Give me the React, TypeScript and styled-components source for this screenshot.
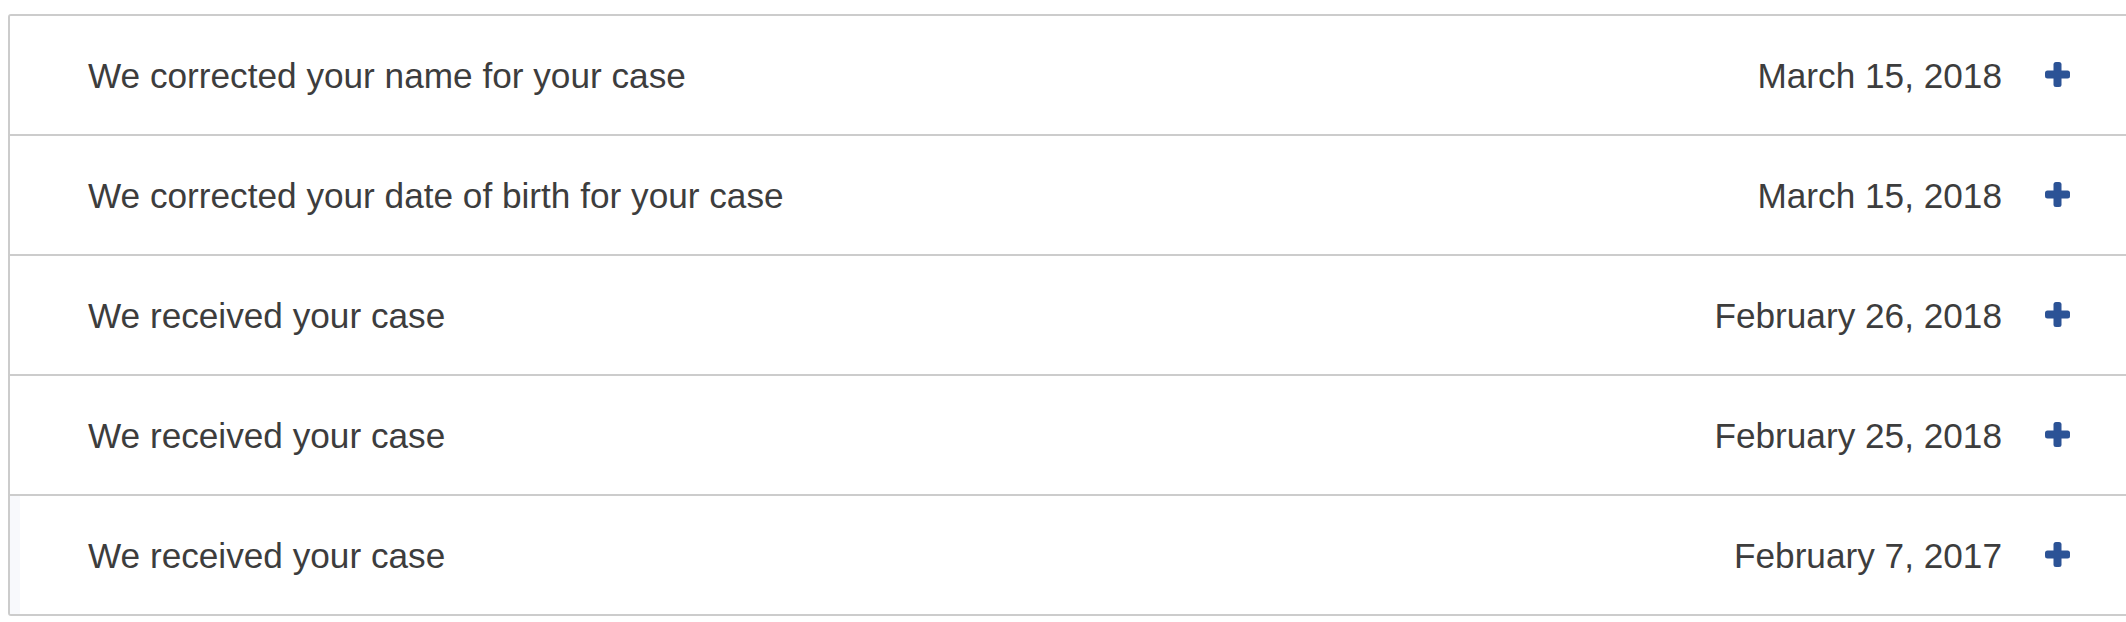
import React from 'react';
import styled, { createGlobalStyle } from 'styled-components';

type CaseEvent = {
  id: number;
  title: string;
  date: string;
  active?: boolean;
};

const events: CaseEvent[] = [
  { id: 1, title: 'We corrected your name for your case', date: 'March 15, 2018' },
  { id: 2, title: 'We corrected your date of birth for your case', date: 'March 15, 2018' },
  { id: 3, title: 'We received your case', date: 'February 26, 2018' },
  { id: 4, title: 'We received your case', date: 'February 25, 2018' },
  { id: 5, title: 'We received your case', date: 'February 7, 2017', active: true }
];

const GlobalStyle = createGlobalStyle`
  html, body {
    margin: 0;
    padding: 0;
    background: #ffffff;
    overflow: hidden;
  }
  body {
    font-family: 'Liberation Sans', Arial, Helvetica, sans-serif;
  }
`;

const Page = styled.div`
  padding: 14px 0 0 8px;
`;

const History = styled.ul`
  list-style: none;
  margin: 0;
  padding: 0;
  width: calc(100vw - 4px);
  box-sizing: border-box;
  border: 2px solid #cccccc;
  border-radius: 3px;
  overflow: hidden;
`;

const Item = styled.li<{ $active?: boolean }>`
  display: flex;
  align-items: center;
  justify-content: space-between;
  box-sizing: border-box;
  height: 118px;
  padding: 2px 58px 0 78px;
  color: #3d3d3d;
  font-size: 35.2px;
  line-height: 1;
  background: ${({ $active }) => ($active ? 'linear-gradient(to right, #f8f9fc 0, #f8f9fc 10px, #ffffff 10px)' : '#ffffff')};

  & + & {
    border-top: 2px solid #cccccc;
    height: 120px;
  }
`;

const Title = styled.span`
  white-space: nowrap;
`;

const Meta = styled.div`
  display: flex;
  align-items: center;
  gap: 43px;
`;

const DateText = styled.span`
  white-space: nowrap;
`;

const ExpandButton = styled.button`
  display: flex;
  align-items: center;
  justify-content: center;
  width: 25px;
  height: 25px;
  padding: 0;
  border: 0;
  background: none;
  cursor: pointer;
  margin-top: -3px;
`;

const PlusIcon = () => (
  <svg width={25} height={25} viewBox={'0 0 25 25'}>
    <rect x={8.5} y={0} width={8} height={25} rx={2.5} fill={'#2c5396'} />
    <rect x={0} y={8.5} width={25} height={8} rx={2.5} fill={'#2c5396'} />
  </svg>
);

const App = () => (
  <>
    <GlobalStyle />
    <Page>
      <History>
        {events.map((item) => (
          <Item
            $active={item.active}
            key={item.id}
          >
            <Title>{item.title}</Title>
            <Meta>
              <DateText>{item.date}</DateText>
              <ExpandButton aria-label={'Expand'}>
                <PlusIcon />
              </ExpandButton>
            </Meta>
          </Item>
        ))}
      </History>
    </Page>
  </>
);

export default App;
